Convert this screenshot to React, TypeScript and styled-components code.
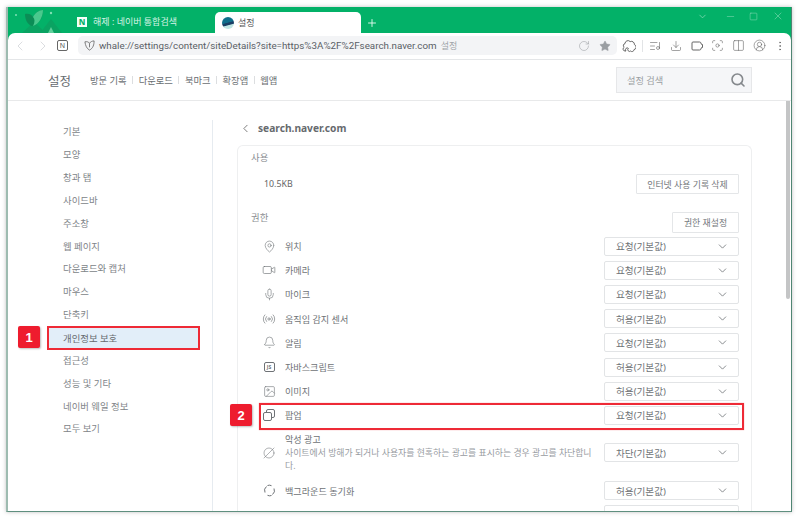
import React from 'react'
import styled, { createGlobalStyle } from 'styled-components'
import {
  Bell,
  ChevronDown,
  ChevronLeft,
  ChevronRight,
  CircleSlash2,
  CircleUserRound,
  Columns2,
  Download,
  Focus,
  Image as ImageIcon,
  ListMusic,
  MapPin,
  Mic,
  Minus,
  MoreVertical,
  Plus,
  Radio,
  RotateCw,
  Search,
  Square,
  Star,
  Video,
  X,
} from 'lucide-react'

const FONT = '"Noto Sans", "Noto Sans CJK KR", sans-serif'
const LATIN_FONT = 'Roboto, "Noto Sans CJK KR", sans-serif'

const GlobalStyle = createGlobalStyle`
  html, body {
    margin: 0;
    padding: 0;
    background: #fff;
    font-family: ${FONT};
  }
  * {
    box-sizing: border-box;
  }
`

const Page = styled.div`
  width: 800px;
  height: 519px;
  padding: 7px 8px 7px 6px;
  overflow: hidden;
`

const Window = styled.div`
  position: relative;
  width: 786px;
  height: 505px;
  display: flex;
  flex-direction: column;
  overflow: hidden;
  background: #03b168;
  border-right: 1px solid #4f8573;
  border-bottom: 1px solid #5f8f7f;
  border-left: 2px solid #9dbbb0;
  box-shadow: 0 0 4px rgba(0, 0, 0, 0.25);
`

const TitleBar = styled.div`
  height: 26px;
  flex: none;
  display: flex;
  align-items: flex-end;
`

const Deco = styled.svg`
  width: 66px;
  height: 26px;
  flex: none;
`

const Tab = styled.div<{ $active?: boolean }>`
  height: ${(p) => (p.$active ? '21px' : '22px')};
  width: ${(p) => (p.$active ? '146px' : '141px')};
  flex: none;
  display: flex;
  align-items: center;
  gap: ${(p) => (p.$active ? '4px' : '6px')};
  padding-left: ${(p) => (p.$active ? '7px' : '3px')};
  padding-bottom: ${(p) => (p.$active ? '0' : '1px')};
  background: ${(p) => (p.$active ? '#fff' : 'transparent')};
  border-radius: 5px 5px 0 0;
  font-size: 9px;
  color: ${(p) => (p.$active ? '#555' : '#d6f3e6')};
  white-space: nowrap;
`

const NaverFavicon = styled.span`
  width: 10px;
  height: 10px;
  flex: none;
  display: flex;
  align-items: center;
  justify-content: center;
  background: #f4fff9;
  color: #03b168;
  font-size: 8px;
  font-weight: 800;
  line-height: 1;
`

const WhaleFavicon = styled.span`
  width: 12px;
  height: 12px;
  flex: none;
  border-radius: 50%;
  background: linear-gradient(165deg, #0f6e8c 0 45%, #1a3f66 50% 62%, #bfe6e4 68% 100%);
`

const NewTab = styled.span`
  width: 22px;
  height: 21px;
  display: flex;
  align-items: center;
  justify-content: center;
  color: #e9fbf2;
`

const WindowControls = styled.div`
  margin-left: auto;
  align-self: stretch;
  display: flex;
  color: #9fe3c3;
`

const WindowButton = styled.span<{ $wide?: number }>`
  width: ${(p) => p.$wide ?? 23}px;
  display: flex;
  align-items: center;
  justify-content: center;
  padding-bottom: 8px;
`

const Toolbar = styled.div`
  height: 27px;
  flex: none;
  display: flex;
  align-items: center;
  padding-bottom: 1px;
  background: #fff;
  border-bottom: 1px solid #e4e6e8;
  border-radius: 7px 7px 0 0;
`

const NavArrow = styled.span`
  width: 23px;
  display: flex;
  justify-content: center;
  color: #c9ccd0;
`

const HomeBox = styled.span`
  width: 11px;
  height: 11px;
  margin: 0 10px 0 3px;
  flex: none;
  display: flex;
  align-items: center;
  justify-content: center;
  border: 1px solid #666;
  border-radius: 2px;
  font-size: 7px;
  line-height: 1;
  color: #555;
`

const UrlBar = styled.div`
  width: 539px;
  height: 19px;
  flex: none;
  display: flex;
  align-items: center;
  padding: 0 6px 0 6px;
  background: #f3f4f6;
  border-radius: 5px;
  font-family: ${LATIN_FONT};
  font-size: 9.8px;
  color: #5a5f66;
  white-space: nowrap;
`

const UrlShield = styled.svg`
  width: 11px;
  height: 11px;
  flex: none;
  margin-right: 4px;
`

const UrlHint = styled.span`
  margin-left: 4px;
  font-size: 9px;
  color: #a0a4a8;
`

const UrlTools = styled.div`
  margin-left: auto;
  display: flex;
  gap: 9px;
  color: #9a9ea2;
`

const Tools = styled.div`
  display: flex;
  align-items: center;
  margin-left: 2px;
  color: #666;
`

const ToolSlot = styled.span`
  width: 20.8px;
  display: flex;
  justify-content: center;
`

const ToolSep = styled.span`
  width: 1px;
  height: 12px;
  margin: 0 2px 0 2px;
  background: #e2e4e6;
`

const Header = styled.header`
  height: 41px;
  flex: none;
  display: flex;
  align-items: center;
  padding: 0 39px 0 40px;
  background: #fff;
  border-bottom: 1px solid #e8e9ea;
`

const HeaderTitle = styled.h1`
  margin: 0 19px 0 0;
  font-size: 12.5px;
  font-weight: 400;
  color: #666b70;
`

const HeaderNav = styled.nav`
  display: flex;
  align-items: center;
  font-size: 9.3px;
  color: #6a6e72;
`

const HeaderSep = styled.span`
  width: 1px;
  height: 8px;
  margin: 0 5.5px;
  background: #dcdee0;
`

const SearchBox = styled.div`
  width: 136px;
  height: 26px;
  margin-left: auto;
  display: flex;
  align-items: center;
  justify-content: space-between;
  padding: 0 5px 0 10px;
  background: #f5f6f8;
  border: 1px solid #e6e7e9;
  font-size: 9.2px;
  color: #9a9ea2;
`

const SearchGlyph = styled(Search)`
  color: #85898d;
`

const Body = styled.div`
  flex: 1;
  min-height: 0;
  display: flex;
  background: #fff;
`

const Sidebar = styled.aside`
  width: 205px;
  flex: none;
  margin-top: 19px;
  border-right: 1px solid #e6ebf0;
`

const SideItem = styled.div<{ $active?: boolean }>`
  height: ${(p) => (p.$active ? '24px' : '22.85px')};
  width: ${(p) => (p.$active ? '153px' : 'auto')};
  margin-left: ${(p) => (p.$active ? '39px' : '0')};
  margin-bottom: ${(p) => (p.$active ? '-1.15px' : '0')};
  padding-left: ${(p) => (p.$active ? '16px' : '55px')};
  display: flex;
  align-items: center;
  font-size: 9.4px;
  color: ${(p) => (p.$active ? '#666a6e' : '#808488')};
  background: ${(p) => (p.$active ? '#e2eef9' : 'transparent')};
  box-shadow: ${(p) => (p.$active ? 'inset 0 0 0 2px #ee2a36' : 'none')};
`

const Content = styled.main`
  flex: 1;
  min-width: 0;
  padding: 15px 0 0 24px;
  overflow: hidden;
`

const SiteTitle = styled.div`
  height: 24px;
  margin-bottom: 5px;
  display: flex;
  align-items: center;
  gap: 6px;
  padding-left: 2px;
  font-size: 10.2px;
  font-weight: 700;
  color: #666a6e;
`

const BackIcon = styled(ChevronLeft)`
  color: #555;
  flex: none;
`

const Card = styled.section`
  width: 515px;
  padding: 0 12px 0 13px;
  border: 1px solid #eeeff0;
  border-bottom: none;
  border-radius: 6px 6px 0 0;
`

const SectionLabel = styled.div`
  height: 22px;
  display: flex;
  align-items: center;
  font-size: 9.4px;
  color: #8a8e92;
`

const UsageRow = styled.div`
  height: 20px;
  margin-top: 6px;
  display: flex;
  align-items: center;
  justify-content: space-between;
  padding-left: 13px;
  font-size: 8.8px;
  color: #666;
`

const PermHeader = styled.div`
  height: 21px;
  margin-top: 18px;
  margin-bottom: 1px;
  display: flex;
  justify-content: space-between;
`

const PermLabel = styled(SectionLabel)`
  height: 9px;
`

const PlainButton = styled.button<{ $width: number; $height: number }>`
  width: ${(p) => p.$width}px;
  height: ${(p) => p.$height}px;
  padding: 0;
  background: #fff;
  border: 1px solid #e4e6e8;
  border-radius: 1px;
  font-family: ${FONT};
  font-size: 8.9px;
  color: #74787c;
`

const Row = styled.div`
  height: 24.2px;
  display: flex;
  align-items: center;
  padding-left: 10px;
`

const AdRow = styled(Row)`
  height: 51px;
  padding-top: 5px;
  padding-bottom: 6px;
`

const RowIcon = styled.span`
  width: 16px;
  flex: none;
  display: flex;
  justify-content: center;
  color: #6e7276;
`

const JsBadge = styled.span`
  width: 11px;
  height: 10px;
  display: flex;
  align-items: center;
  justify-content: center;
  border: 1px solid #6e7276;
  border-radius: 2px;
  font-size: 5px;
  font-weight: 700;
  line-height: 1;
`

const RowLabel = styled.div`
  margin-left: 8px;
  font-size: 9.1px;
  color: #6e7276;
`

const AdText = styled.div`
  width: 307px;
  margin-left: 8px;
  font-size: 9.1px;
  color: #6e7276;
  line-height: 13px;
`

const AdDesc = styled.div`
  font-size: 8.9px;
  color: #979b9f;
  line-height: 13.5px;
  word-break: break-all;
`

const Select = styled.div`
  width: 135px;
  height: 19px;
  margin-left: auto;
  flex: none;
  display: flex;
  align-items: center;
  justify-content: space-between;
  padding: 0 9px 0 11px;
  background: #fff;
  border: 1px solid #e2e4e6;
  border-radius: 2px;
  font-size: 9.6px;
  color: #6e7276;
`

const SelectArrow = styled(ChevronDown)`
  color: #6e7276;
  flex: none;
`

const Scrollbar = styled.div`
  position: absolute;
  top: 94px;
  right: 1px;
  width: 4px;
  height: 198px;
  background: #c4c5c6;
  border-radius: 0 0 2px 2px;
`

const MarkBox = styled.div`
  position: absolute;
  left: 251px;
  top: 396px;
  width: 485px;
  height: 27px;
  border: 2px solid #ee2a36;
  box-shadow: 0 0 1px rgba(238, 42, 54, 0.5);
`

const Badge = styled.div<{ $left: number; $top: number }>`
  position: absolute;
  left: ${(p) => p.$left}px;
  top: ${(p) => p.$top}px;
  width: 22px;
  height: 22px;
  display: flex;
  align-items: center;
  justify-content: center;
  background: #ee1c2e;
  border-radius: 2px;
  box-shadow: 1px 1px 2px rgba(0, 0, 0, 0.25);
  color: #fff;
  font-family: "Liberation Sans", sans-serif;
  font-size: 13px;
  font-weight: 700;
`

const SIDE_ITEMS = [
  '기본',
  '모양',
  '창과 탭',
  '사이드바',
  '주소창',
  '웹 페이지',
  '다운로드와 캡처',
  '마우스',
  '단축키',
  '개인정보 보호',
  '접근성',
  '성능 및 기타',
  '네이버 웨일 정보',
  '모두 보기',
]

const HEADER_LINKS = ['방문 기록', '다운로드', '북마크', '확장앱', '웹앱']

const SyncIcon = () => (
  <svg width="13" height="13" viewBox="0 0 13 13" fill="none" stroke="currentColor" strokeWidth="1">
    <path d="M2 8.5A5 5 0 0 1 3.5 2.5" />
    <path d="M11 4.5A5 5 0 0 1 9.5 10.5" />
    <path d="M4.5 1.5A5 5 0 0 1 8.5 1.7" />
    <path d="M8.5 11.5A5 5 0 0 1 4.5 11.3" />
  </svg>
)

const PopupIcon = () => (
  <svg width="14" height="14" viewBox="0 0 14 14" fill="none" stroke="currentColor" strokeWidth="1">
    <rect x="1.5" y="4.5" width="8" height="8" rx="1.5" />
    <path d="M4.5 4.5V3A1.5 1.5 0 0 1 6 1.5H11A1.5 1.5 0 0 1 12.5 3V8A1.5 1.5 0 0 1 11 9.5H9.5" />
  </svg>
)

const PuzzleIcon = () => (
  <svg width="14" height="14" viewBox="0 0 14 14" fill="none" stroke="currentColor" strokeWidth="1">
    <path d="M4 12H3A2 2 0 0 1 2.2 8.2 2 2 0 0 1 3 4.6 3 3 0 0 1 8.2 2.6 3 3 0 0 1 12.4 5.6 2.6 2.6 0 0 1 12 10.6 2 2 0 0 1 8.6 12 1.6 1.6 0 0 1 6.4 9.4 1.4 1.4 0 0 0 4 12Z" />
  </svg>
)

const CaptureIcon = () => (
  <svg width="14" height="14" viewBox="0 0 14 14" fill="none" stroke="currentColor" strokeWidth="1">
    <path d="M3 3H9.5A1.5 1.5 0 0 1 11 4.5V5L12.5 5.5V8.5L11 9V9.5A1.5 1.5 0 0 1 9.5 11H3A1 1 0 0 1 2 10V4A1 1 0 0 1 3 3Z" />
  </svg>
)

const permissions = [
  { icon: <MapPin size={13} strokeWidth={1.1} />, label: '위치', value: '요청(기본값)' },
  { icon: <Video size={14} strokeWidth={1.1} />, label: '카메라', value: '요청(기본값)' },
  { icon: <Mic size={13} strokeWidth={1.1} />, label: '마이크', value: '요청(기본값)' },
  { icon: <Radio size={14} strokeWidth={1.1} />, label: '움직임 감지 센서', value: '허용(기본값)' },
  { icon: <Bell size={13} strokeWidth={1.1} />, label: '알림', value: '요청(기본값)' },
  { icon: <JsBadge>JS</JsBadge>, label: '자바스크립트', value: '허용(기본값)' },
  { icon: <ImageIcon size={13} strokeWidth={1.1} />, label: '이미지', value: '허용(기본값)' },
  { icon: <PopupIcon />, label: '팝업', value: '요청(기본값)' },
]

const PermSelect = ({ value }: { value: string }) => (
  <Select>
    {value}
    <SelectArrow size={13} strokeWidth={1.5} />
  </Select>
)

const App = () => {
  return (
    <Page>
      <GlobalStyle />
      <Window>
        <TitleBar>
          <Deco viewBox="0 0 66 26">
            <path d="M14 26L26 15L38 26Z" fill="#0aa362" />
            <path d="M32 26L43 12L54 26Z" fill="#0aa362" />
            <path d="M40 26L43 20L46 26Z" fill="#5fd09b" />
            <path d="M17 7C21 6 24 8 25 10C27 6 31 3 35 3C35 10 31 18 24 19C20 18 17 13 17 7Z" fill="#0b8d56" />
            <path d="M25 10C27 6 31 3 35 3C35 10 31 17 25 19C27 15 27 12 25 10Z" fill="#49c98d" />
            <circle cx="8" cy="8" r="1" fill="#7fe0b4" />
            <circle cx="43" cy="6" r="1.2" fill="#7fe0b4" />
          </Deco>
          <Tab>
            <NaverFavicon>N</NaverFavicon>
            해제 : 네이버 통합검색
          </Tab>
          <Tab $active>
            <WhaleFavicon />
            설정
          </Tab>
          <NewTab>
            <Plus size={12} strokeWidth={1.8} />
          </NewTab>
          <WindowControls>
            <WindowButton $wide={33}>
              <ChevronDown size={11} strokeWidth={1.4} />
            </WindowButton>
            <WindowButton>
              <Minus size={11} strokeWidth={1} />
            </WindowButton>
            <WindowButton>
              <Square size={9} strokeWidth={1.2} />
            </WindowButton>
            <WindowButton $wide={26}>
              <X size={12} strokeWidth={1} />
            </WindowButton>
          </WindowControls>
        </TitleBar>

        <Toolbar>
          <NavArrow>
            <ChevronLeft size={16} strokeWidth={1} />
          </NavArrow>
          <NavArrow>
            <ChevronRight size={16} strokeWidth={1} />
          </NavArrow>
          <HomeBox>N</HomeBox>
          <UrlBar>
            <UrlShield viewBox="0 0 12 12" fill="none" stroke="#666" strokeWidth="0.9">
              <path d="M1 2C3 1.5 5 2 6 3.5C7 2 9 1 11 1C11 5 10 9 6 11C3 9.5 1.5 6 1 2Z" />
              <path d="M6 3.5V8" />
            </UrlShield>
            whale://settings/content/siteDetails?site=https%3A%2F%2Fsearch.naver.com
            <UrlHint>설정</UrlHint>
            <UrlTools>
              <RotateCw size={12} strokeWidth={1.1} />
              <Star size={12} fill="currentColor" strokeWidth={1} />
            </UrlTools>
          </UrlBar>
          <Tools>
            <ToolSlot>
              <PuzzleIcon />
            </ToolSlot>
            <ToolSep />
            <ToolSlot>
              <ListMusic size={12} strokeWidth={1.2} />
            </ToolSlot>
            <ToolSlot>
              <Download size={12} strokeWidth={1.2} />
            </ToolSlot>
            <ToolSlot>
              <CaptureIcon />
            </ToolSlot>
            <ToolSlot>
              <Focus size={13} strokeWidth={1.1} />
            </ToolSlot>
            <ToolSlot>
              <Columns2 size={13} strokeWidth={1.1} />
            </ToolSlot>
            <ToolSlot>
              <CircleUserRound size={13} strokeWidth={1.1} />
            </ToolSlot>
            <ToolSlot>
              <MoreVertical size={12} strokeWidth={1.4} />
            </ToolSlot>
          </Tools>
        </Toolbar>

        <Header>
          <HeaderTitle>설정</HeaderTitle>
          <HeaderNav>
            {HEADER_LINKS.map((link, index) => (
              <React.Fragment key={link}>
                {index > 0 && <HeaderSep />}
                <span>{link}</span>
              </React.Fragment>
            ))}
          </HeaderNav>
          <SearchBox>
            설정 검색
            <SearchGlyph size={16} strokeWidth={2.4} />
          </SearchBox>
        </Header>

        <Body>
          <Sidebar>
            {SIDE_ITEMS.map((item) => (
              <SideItem key={item} $active={item === '개인정보 보호'}>
                {item}
              </SideItem>
            ))}
          </Sidebar>
          <Content>
            <SiteTitle>
              <BackIcon size={13} strokeWidth={1.4} />
              search.naver.com
            </SiteTitle>
            <Card>
              <SectionLabel>사용</SectionLabel>
              <UsageRow>
                10.5KB
                <PlainButton $width={103} $height={20}>
                  인터넷 사용 기록 삭제
                </PlainButton>
              </UsageRow>
              <PermHeader>
                <PermLabel>권한</PermLabel>
                <PlainButton $width={67} $height={21}>
                  권한 재설정
                </PlainButton>
              </PermHeader>
              {permissions.map((perm) => (
                <Row key={perm.label}>
                  <RowIcon>{perm.icon}</RowIcon>
                  <RowLabel>{perm.label}</RowLabel>
                  <PermSelect value={perm.value} />
                </Row>
              ))}
              <AdRow>
                <RowIcon>
                  <CircleSlash2 size={12} strokeWidth={1.1} />
                </RowIcon>
                <AdText>
                  악성 광고
                  <AdDesc>사이트에서 방해가 되거나 사용자를 현혹하는 광고를 표시하는 경우 광고를 차단합니다.</AdDesc>
                </AdText>
                <PermSelect value="차단(기본값)" />
              </AdRow>
              <Row>
                <RowIcon>
                  <SyncIcon />
                </RowIcon>
                <RowLabel>백그라운드 동기화</RowLabel>
                <PermSelect value="허용(기본값)" />
              </Row>
              <Row>
                <Select />
              </Row>
            </Card>
          </Content>
        </Body>

        <Scrollbar />
        <MarkBox />
        <Badge $left={10} $top={319}>1</Badge>
        <Badge $left={222} $top={397}>2</Badge>
      </Window>
    </Page>
  )
}

export default App
